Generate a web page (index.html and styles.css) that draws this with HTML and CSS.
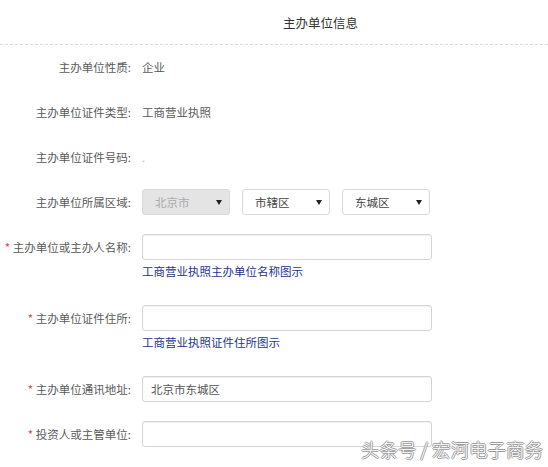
FILE: index.html
```html
<html>

<head>
    <meta charset="utf-8">
    <link rel="stylesheet" href="styles.css">
</head>

<body>
    <div class="p-head">
        <div class="p-title">主办单位信息</div>
    </div>

    <div class="p-form">
        <!-- read only -->
        <div class="p-row">
            <div class="p-label">主办单位性质:</div>
            <div class="p-value">企业</div>
        </div>
        <div class="p-row">
            <div class="p-label">主办单位证件类型:</div>
            <div class="p-value">工商营业执照</div>
        </div>
        <div class="p-row">
            <div class="p-label">主办单位证件号码:</div>
            <div class="p-value p-dot">.</div>
        </div>

        <!-- region -->
        <div class="p-row">
            <div class="p-label">主办单位所属区域:</div>
            <div class="p-selects">
                <div class="p-select p-disabled"><span>北京市</span><i class="p-caret"></i></div>
                <div class="p-select"><span>市辖区</span><i class="p-caret"></i></div>
                <div class="p-select"><span>东城区</span><i class="p-caret"></i></div>
            </div>
        </div>

        <!-- inputs -->
        <div class="p-row p-has-hint">
            <div class="p-label"><em>*</em> 主办单位或主办人名称:</div>
            <div class="p-field">
                <input class="p-input" type="text">
                <a class="p-hint">工商营业执照主办单位名称图示</a>
            </div>
        </div>
        <div class="p-row p-has-hint">
            <div class="p-label"><em>*</em> 主办单位证件住所:</div>
            <div class="p-field">
                <input class="p-input" type="text">
                <a class="p-hint">工商营业执照证件住所图示</a>
            </div>
        </div>
        <div class="p-row">
            <div class="p-label"><em>*</em> 主办单位通讯地址:</div>
            <div class="p-field">
                <input class="p-input" type="text" value="北京市东城区">
            </div>
        </div>
        <div class="p-row">
            <div class="p-label"><em>*</em> 投资人或主管单位:</div>
            <div class="p-field">
                <input class="p-input" type="text">
            </div>
        </div>
    </div>

    <div class="p-mark">头条号 / 宏河电子商务</div>
</body>

</html>
```

FILE: styles.css
```css
body {
    margin: 0;
    background: #fff;
    font-family: "Noto Sans CJK SC", "Noto Sans", sans-serif;
    font-size: 11.5px;
    color: #5a5a5a;
    position: relative;
    height: 467px;
    overflow: hidden;
}

/* header */
.p-head {
    height: 44px;
    border-bottom: 1px dashed #dcdcdc;
    display: flex;
    align-items: center;
    padding-left: 283px;
}

.p-title {
    font-size: 12.5px;
    color: #333;
    margin-top: 1px;
}

/* form */
.p-form {
    padding-top: 9px;
    display: flex;
    flex-direction: column;
}

.p-row {
    display: flex;
    align-items: flex-start;
    gap: 11px;
    margin-bottom: 19px;
}

.p-row.p-has-hint {
    margin-bottom: 27px;
}

.p-label {
    width: 131px;
    flex: none;
    text-align: right;
    line-height: 26px;
    white-space: nowrap;
}

.p-label em {
    font-style: normal;
    color: #e0413e;
}

.p-value {
    line-height: 26px;
}

.p-dot {
    color: #bbb;
}

/* selects */
.p-selects {
    display: flex;
    gap: 12px;
}

.p-select {
    box-sizing: border-box;
    width: 88px;
    height: 26px;
    border: 1px solid #d9d9d9;
    border-radius: 3px;
    display: flex;
    align-items: center;
    justify-content: space-between;
    padding: 0 7px 0 12px;
    color: #444;
    background: #fff;
}

.p-select.p-disabled {
    background: #e4e4e4;
    color: #aaa;
}

.p-caret {
    width: 0;
    height: 0;
    border-left: 3px solid transparent;
    border-right: 3px solid transparent;
    border-top: 5px solid #222;
}

/* inputs */
.p-field {
    display: flex;
    flex-direction: column;
    align-items: flex-start;
}

.p-input {
    box-sizing: border-box;
    width: 290px;
    height: 26px;
    margin: 0;
    border: 1px solid #d4d4d4;
    border-radius: 3px;
    box-shadow: inset 0 1px 1px rgba(0, 0, 0, 0.06);
    padding: 0 8px;
    font-family: inherit;
    font-size: 11.5px;
    color: #555;
    outline: none;
}

.p-hint {
    margin-top: 4px;
    line-height: 14px;
    color: #23358f;
    text-decoration: none;
}

/* watermark */
.p-mark {
    position: absolute;
    right: 5px;
    top: 436px;
    font-size: 18.5px;
    font-weight: 300;
    color: #fff;
    white-space: nowrap;
    text-shadow: 1px 0 0 #999, -1px 0 0 #999, 0 1px 0 #999, 0 -1px 0 #999;
}
```
